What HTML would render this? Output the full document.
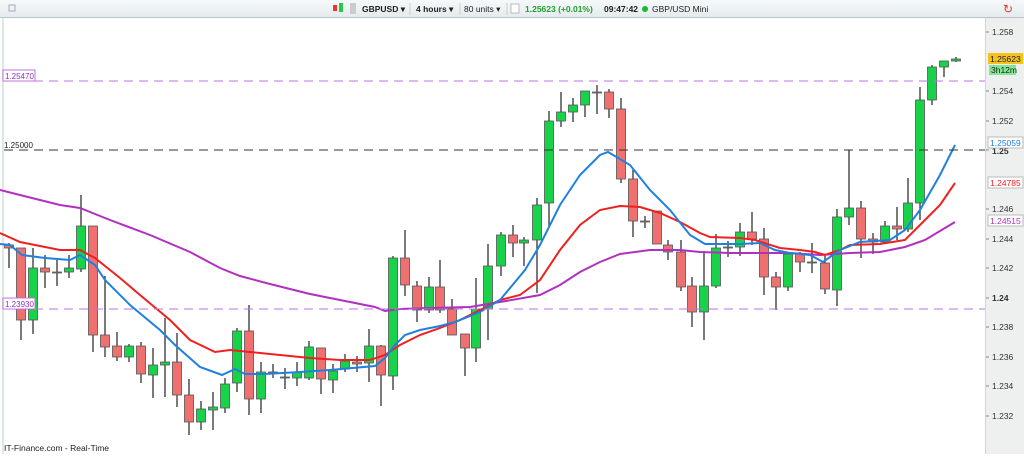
<!DOCTYPE html><html><head><style>
body{margin:0;width:1024px;height:454px;overflow:hidden;background:#fff;font-family:"Liberation Sans",sans-serif}
</style></head><body>
<svg width="1024" height="454" xmlns="http://www.w3.org/2000/svg" font-family="Liberation Sans, sans-serif">
<defs><linearGradient id="tb" x1="0" y1="0" x2="0" y2="1"><stop offset="0" stop-color="#f6f9fa"/><stop offset="1" stop-color="#e3eaed"/></linearGradient></defs>
<rect x="0" y="0" width="1024" height="18" fill="url(#tb)"/>
<line x1="0" y1="17.5" x2="1024" y2="17.5" stroke="#b8c4c8"/>
<rect x="9" y="5" width="6" height="6" fill="none" stroke="#aab" />
<rect x="2" y="18" width="2" height="436" fill="#dfe6e8"/>
<rect x="986" y="18" width="38" height="436" fill="#eef0f0"/>
<line x1="985.5" y1="18" x2="985.5" y2="454" stroke="#d0d4d4"/>
<!-- toolbar -->
<rect x="333" y="5" width="4" height="6" fill="#e33"/><rect x="339" y="3" width="4" height="9" fill="#2c4"/>
<rect x="350" y="3" width="6" height="11" fill="#ccc"/>
<text x="362" y="12" font-size="8.5" font-weight="bold" fill="#222">GBPUSD ▾</text>
<line x1="410" y1="3" x2="410" y2="15" stroke="#ccc"/>
<text x="416" y="12" font-size="8.5" font-weight="bold" fill="#222">4 hours ▾</text>
<line x1="460" y1="3" x2="460" y2="15" stroke="#ccc"/>
<text x="464" y="12" font-size="8.5" fill="#222">80 units ▾</text>
<line x1="507" y1="3" x2="507" y2="15" stroke="#ccc"/>
<rect x="511" y="4" width="8" height="9" fill="#fff" stroke="#bbb"/>
<text x="525" y="12" font-size="8.5" font-weight="bold" fill="#22a030">1.25623 (+0.01%)</text>
<text x="604" y="12" font-size="8.5" font-weight="bold" fill="#222">09:47:42</text>
<circle cx="645" cy="9" r="3" fill="#1b3"/>
<text x="652" y="12" font-size="8.5" fill="#222">GBP/USD Mini</text>
<text x="1003" y="13" font-size="12" fill="#e33">↻</text>
<!-- axis labels -->
<g font-size="8.5" fill="#333">
<text x="992" y="35">1.258</text><text x="992" y="94">1.254</text><text x="992" y="124">1.252</text><text x="992" y="154" font-weight="bold">1.25</text><text x="992" y="212">1.246</text><text x="992" y="242">1.244</text><text x="992" y="271">1.242</text><text x="992" y="301" font-weight="bold">1.24</text><text x="992" y="330">1.238</text><text x="992" y="360">1.236</text><text x="992" y="389">1.234</text><text x="992" y="419">1.232</text>
</g>
<g stroke="#888"><line x1="986" y1="32" x2="989" y2="32"/><line x1="986" y1="91" x2="989" y2="91"/><line x1="986" y1="121" x2="989" y2="121"/><line x1="986" y1="150" x2="989" y2="150"/><line x1="986" y1="209" x2="989" y2="209"/><line x1="986" y1="239" x2="989" y2="239"/><line x1="986" y1="268" x2="989" y2="268"/><line x1="986" y1="298" x2="989" y2="298"/><line x1="986" y1="327" x2="989" y2="327"/><line x1="986" y1="357" x2="989" y2="357"/><line x1="986" y1="386" x2="989" y2="386"/><line x1="986" y1="416" x2="989" y2="416"/></g>
<!-- candles -->
<g stroke="#333" stroke-width="1.3">
<line x1="9" y1="243" x2="9" y2="268"/><line x1="21" y1="248" x2="21" y2="340"/><line x1="33" y1="248" x2="33" y2="334"/><line x1="45" y1="255" x2="45" y2="288"/><line x1="57" y1="260" x2="57" y2="286"/><line x1="69" y1="255" x2="69" y2="278"/><line x1="81" y1="195" x2="81" y2="272"/><line x1="93" y1="226" x2="93" y2="352"/><line x1="105" y1="276" x2="105" y2="357"/><line x1="117" y1="332" x2="117" y2="361"/><line x1="129" y1="344" x2="129" y2="362"/><line x1="141" y1="342" x2="141" y2="383"/><line x1="153" y1="348" x2="153" y2="398"/><line x1="165" y1="318" x2="165" y2="397"/><line x1="177" y1="333" x2="177" y2="407"/><line x1="189" y1="379" x2="189" y2="435"/><line x1="201" y1="401" x2="201" y2="430"/><line x1="213" y1="392" x2="213" y2="430"/><line x1="225" y1="378" x2="225" y2="413"/><line x1="237" y1="328" x2="237" y2="392"/><line x1="249" y1="305" x2="249" y2="415"/><line x1="261" y1="362" x2="261" y2="413"/><line x1="273" y1="364" x2="273" y2="378"/><line x1="285" y1="368" x2="285" y2="389"/><line x1="297" y1="362" x2="297" y2="386"/><line x1="309" y1="341" x2="309" y2="380"/><line x1="321" y1="348" x2="321" y2="394"/><line x1="333" y1="364" x2="333" y2="393"/><line x1="345" y1="354" x2="345" y2="372"/><line x1="357" y1="356" x2="357" y2="372"/><line x1="369" y1="329" x2="369" y2="382"/><line x1="381" y1="345" x2="381" y2="406"/><line x1="393" y1="256" x2="393" y2="390"/><line x1="405" y1="230" x2="405" y2="296"/><line x1="417" y1="281" x2="417" y2="322"/><line x1="429" y1="277" x2="429" y2="313"/><line x1="440" y1="260" x2="440" y2="313"/><line x1="452" y1="299" x2="452" y2="335"/><line x1="465" y1="334" x2="465" y2="376"/><line x1="476" y1="278" x2="476" y2="362"/><line x1="488" y1="244" x2="488" y2="340"/><line x1="501" y1="232" x2="501" y2="276"/><line x1="513" y1="225" x2="513" y2="257"/><line x1="524" y1="237" x2="524" y2="266"/><line x1="537" y1="198" x2="537" y2="293"/><line x1="549" y1="111" x2="549" y2="227"/><line x1="561" y1="92" x2="561" y2="127"/><line x1="573" y1="98" x2="573" y2="122"/><line x1="585" y1="91" x2="585" y2="117"/><line x1="597" y1="85" x2="597" y2="114"/><line x1="609" y1="89" x2="609" y2="118"/><line x1="621" y1="98" x2="621" y2="183"/><line x1="633" y1="170" x2="633" y2="237"/><line x1="645" y1="216" x2="645" y2="228"/><line x1="657" y1="211" x2="657" y2="244"/><line x1="668" y1="240" x2="668" y2="260"/><line x1="681" y1="240" x2="681" y2="291"/><line x1="692" y1="277" x2="692" y2="327"/><line x1="704" y1="251" x2="704" y2="340"/><line x1="716" y1="234" x2="716" y2="288"/><line x1="728" y1="241" x2="728" y2="257"/><line x1="740" y1="223" x2="740" y2="256"/><line x1="752" y1="212" x2="752" y2="245"/><line x1="764" y1="228" x2="764" y2="295"/><line x1="776" y1="272" x2="776" y2="310"/><line x1="788" y1="252" x2="788" y2="291"/><line x1="800" y1="252" x2="800" y2="272"/><line x1="812" y1="243" x2="812" y2="273"/><line x1="825" y1="254" x2="825" y2="294"/><line x1="837" y1="209" x2="837" y2="306"/><line x1="849" y1="150" x2="849" y2="225"/><line x1="861" y1="201" x2="861" y2="258"/><line x1="873" y1="233" x2="873" y2="254"/><line x1="885" y1="221" x2="885" y2="244"/><line x1="897" y1="207" x2="897" y2="240"/><line x1="908" y1="178" x2="908" y2="232"/><line x1="920" y1="87" x2="920" y2="220"/><line x1="932" y1="65" x2="932" y2="105"/><line x1="944" y1="61" x2="944" y2="77"/><line x1="956" y1="57" x2="956" y2="62"/>
</g>
<g stroke="#555" stroke-width="0.8">
<g fill="#f07070">
<rect x="4.5" y="245" width="9" height="3"/><rect x="16.5" y="248" width="9" height="72"/><rect x="40.5" y="268" width="9" height="4"/><rect x="52.5" y="272" width="9" height="1"/><rect x="88.5" y="226" width="9" height="109"/><rect x="100.5" y="335" width="9" height="12"/><rect x="112.5" y="346" width="9" height="11"/><rect x="136.5" y="346" width="9" height="28"/><rect x="172.5" y="362" width="9" height="33"/><rect x="184.5" y="395" width="9" height="27"/><rect x="244.5" y="331" width="9" height="68"/><rect x="268.5" y="372" width="9" height="1"/><rect x="316.5" y="348" width="9" height="31"/><rect x="352.5" y="362" width="9" height="2"/><rect x="376.5" y="346" width="9" height="29"/><rect x="400.5" y="258" width="9" height="27"/><rect x="412.5" y="286" width="9" height="24"/><rect x="435.5" y="287" width="9" height="23"/><rect x="447.5" y="309" width="9" height="26"/><rect x="460.5" y="334" width="9" height="14"/><rect x="508.5" y="235" width="9" height="8"/><rect x="592.5" y="92" width="9" height="1"/><rect x="604.5" y="92" width="9" height="17"/><rect x="616.5" y="109" width="9" height="70"/><rect x="628.5" y="179" width="9" height="42"/><rect x="640.5" y="221" width="9" height="1"/><rect x="652.5" y="211" width="9" height="33"/><rect x="663.5" y="245" width="9" height="7"/><rect x="676.5" y="252" width="9" height="35"/><rect x="687.5" y="286" width="9" height="26"/><rect x="747.5" y="232" width="9" height="7"/><rect x="759.5" y="239" width="9" height="38"/><rect x="771.5" y="277" width="9" height="10"/><rect x="795.5" y="254" width="9" height="8"/><rect x="820.5" y="263" width="9" height="26"/><rect x="856.5" y="208" width="9" height="31"/><rect x="868.5" y="239" width="9" height="3"/><rect x="892.5" y="226" width="9" height="3"/>
</g>
<g fill="#18d24a">
<rect x="28.5" y="268" width="9" height="52"/><rect x="64.5" y="268" width="9" height="4"/><rect x="76.5" y="226" width="9" height="43"/><rect x="124.5" y="346" width="9" height="11"/><rect x="148.5" y="365" width="9" height="10"/><rect x="160.5" y="362" width="9" height="3"/><rect x="196.5" y="409" width="9" height="13"/><rect x="208.5" y="407" width="9" height="3"/><rect x="220.5" y="384" width="9" height="24"/><rect x="232.5" y="331" width="9" height="52"/><rect x="256.5" y="372" width="9" height="27"/><rect x="280.5" y="377" width="9" height="1"/><rect x="292.5" y="372" width="9" height="6"/><rect x="304.5" y="347" width="9" height="31"/><rect x="328.5" y="371" width="9" height="9"/><rect x="340.5" y="361" width="9" height="8"/><rect x="364.5" y="346" width="9" height="17"/><rect x="388.5" y="258" width="9" height="118"/><rect x="424.5" y="287" width="9" height="23"/><rect x="471.5" y="309" width="9" height="39"/><rect x="483.5" y="266" width="9" height="43"/><rect x="496.5" y="235" width="9" height="31"/><rect x="519.5" y="240" width="9" height="3"/><rect x="532.5" y="205" width="9" height="35"/><rect x="544.5" y="121" width="9" height="82"/><rect x="556.5" y="112" width="9" height="9"/><rect x="568.5" y="105" width="9" height="7"/><rect x="580.5" y="91" width="9" height="14"/><rect x="699.5" y="286" width="9" height="26"/><rect x="711.5" y="248" width="9" height="38"/><rect x="723.5" y="247" width="9" height="1"/><rect x="735.5" y="232" width="9" height="15"/><rect x="783.5" y="254" width="9" height="33"/><rect x="807.5" y="262" width="9" height="1"/><rect x="832.5" y="217" width="9" height="73"/><rect x="844.5" y="208" width="9" height="9"/><rect x="880.5" y="226" width="9" height="16"/><rect x="903.5" y="203" width="9" height="26"/><rect x="915.5" y="100" width="9" height="103"/><rect x="927.5" y="67" width="9" height="33"/><rect x="939.5" y="61" width="9" height="6"/><rect x="951.5" y="59" width="9" height="2"/>
</g></g>
<!-- MAs -->
<polyline fill="none" stroke="#b030c0" stroke-width="2" points="0,190 20,195 60,205 80,208 110,220 150,235 190,252 220,268 240,276 270,284 310,294 350,302 375,307 385,311 400,309 430,308 470,307 500,302 540,295 560,285 580,272 600,262 620,254 650,250 680,250 700,252 730,253 760,253 790,253 820,255 850,253 880,252 905,247 925,240 955,222"/>
<polyline fill="none" stroke="#f02020" stroke-width="2" points="0,233 20,242 60,250 80,250 95,258 120,278 140,295 170,320 190,340 215,352 230,350 250,352 280,355 310,358 340,360 370,360 385,355 400,345 420,335 440,328 460,320 480,310 500,300 520,295 540,280 560,250 580,225 600,210 620,206 640,207 660,213 680,222 700,233 710,237 740,238 755,240 780,248 800,250 815,252 825,255 840,250 850,245 880,244 905,240 920,225 940,205 955,183"/>
<polyline fill="none" stroke="#2080e0" stroke-width="2" points="0,244 10,245 22,255 45,258 70,260 80,255 95,265 105,280 130,305 160,330 175,345 200,367 222,375 235,369 245,374 265,374 300,372 330,370 375,366 385,358 395,345 405,335 420,330 440,326 455,322 480,312 500,300 525,270 540,245 560,205 580,175 600,155 608,152 630,165 650,190 670,210 690,235 705,244 740,244 760,243 775,250 790,253 810,255 823,262 840,250 860,242 890,240 905,230 920,210 940,175 955,145"/>
<!-- dashed lines -->
<line x1="4" y1="81" x2="985" y2="81" stroke="#c070e0" stroke-dasharray="9,6"/>
<line x1="4" y1="150" x2="985" y2="150" stroke="#333" stroke-dasharray="9,6"/>
<line x1="4" y1="309" x2="985" y2="309" stroke="#c070e0" stroke-dasharray="9,6"/>
<rect x="3" y="70" width="32" height="11" fill="#fff" stroke="#c070e0"/><text x="5" y="79" font-size="8" fill="#9030c0">1.25470</text>
<text x="4" y="148" font-size="8" fill="#222">1.25000</text>
<rect x="3" y="298" width="32" height="11" fill="#fff" stroke="#c070e0"/><text x="5" y="307" font-size="8" fill="#9030c0">1.23930</text>
<!-- tags -->
<rect x="988" y="53" width="35" height="11" fill="#f5c020"/><text x="990" y="62" font-size="8.5" fill="#222">1.25623</text>
<rect x="989" y="65" width="27" height="10" fill="#80e890"/><text x="991" y="73" font-size="8.5" fill="#222">3h12m</text>
<rect x="988" y="137" width="35" height="11" fill="#fff" stroke="#bbb"/><text x="990" y="146" font-size="8.5" fill="#2080e0">1.25059</text>
<rect x="988" y="177" width="35" height="11" fill="#fff" stroke="#bbb"/><text x="990" y="186" font-size="8.5" fill="#f02020">1.24785</text>
<rect x="988" y="215" width="35" height="11" fill="#fff" stroke="#bbb"/><text x="990" y="224" font-size="8.5" fill="#b030c0">1.24515</text>
<text x="4" y="451" font-size="8.5" fill="#222">IT-Finance.com - Real-Time</text>
</svg>
</body></html>
